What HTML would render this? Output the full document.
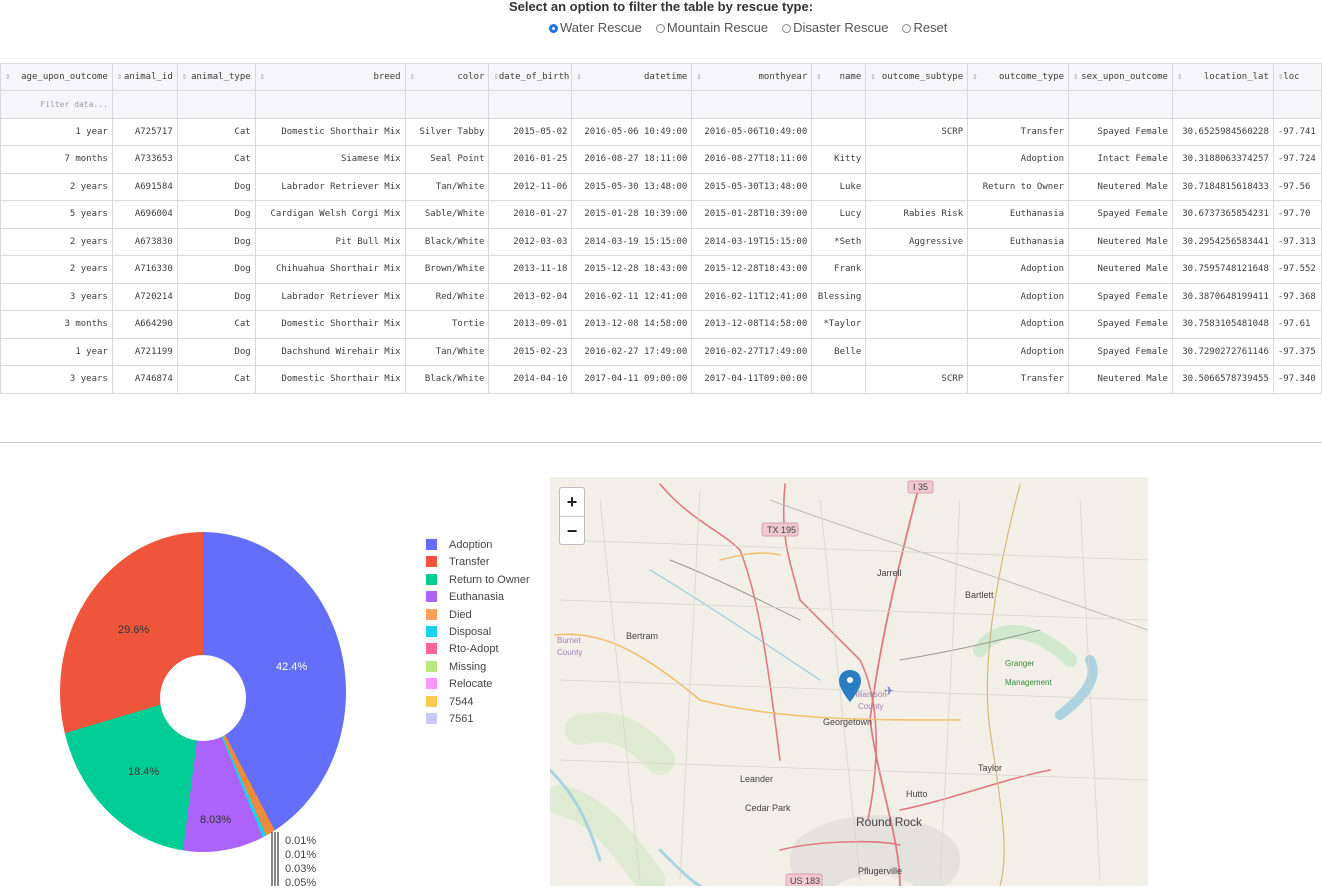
<!DOCTYPE html>
<html><head><meta charset="utf-8">
<style>
body{margin:0;width:1322px;height:886px;overflow:hidden;background:#fff;font-family:"Liberation Sans",sans-serif;position:relative}
.title{position:absolute;top:0;left:0;width:1322px;text-align:center;font-size:13px;font-weight:bold;color:#333;line-height:14px}
.radios{position:absolute;top:20px;left:549px;font-size:13px;color:#555;white-space:nowrap}
.radios span{display:inline-block;margin-right:14px}
.rb{display:inline-block;width:9px;height:9px;border:1px solid #888;border-radius:50%;vertical-align:-1px;margin-right:2px;box-sizing:border-box}
.rb.on{border:3px solid #1a73e8;background:#fff}
table{position:absolute;top:63px;left:0;border-collapse:collapse;table-layout:fixed;font-family:"DejaVu Sans Mono","Liberation Mono",monospace;font-size:9px;color:#3c3c3c}
td{border:1px solid #d8d8e0;height:26.5px;padding:0 4px;text-align:right;white-space:nowrap;overflow:hidden}
tr.h td{background:#f6f6f8;height:26px}
tr.f td{background:#f6f6f8;text-align:right;color:#999;font-size:8px}
.s{color:#aaa;float:left}
.hr{position:absolute;top:442px;left:0;width:1322px;border-top:1px solid #ccd}
.pie{position:absolute;left:60px;top:532px;width:286px;height:320px;border-radius:50%;
background:conic-gradient(#636efa 0 152.6deg,#ef8a3b 152.6deg 156.2deg,#19d3f3 156.2deg 157.6deg,#ab63fa 157.6deg 158.3deg,#ab63fa 158.3deg 187.2deg,#00cc96 187.2deg 253.4deg,#ef553b 253.4deg 360deg)}
.hole{position:absolute;left:160px;top:655px;width:86px;height:86px;border-radius:50%;background:#fff}
.pl{position:absolute;font-size:11px;color:#444}
.leg{position:absolute;left:426px;top:538px;font-size:11px;color:#444}
.leg div{height:17.4px;line-height:14px}
.leg i{display:inline-block;width:11px;height:11px;vertical-align:-2px;margin-right:12px}
.map{position:absolute;left:550px;top:477px;width:598px;height:409px;background:#f2efe9;overflow:hidden}
.zoom{position:absolute;left:559px;top:487px;width:24px;height:56px;background:#fff;border:1px solid #bbb;border-radius:3px;font-size:18px;text-align:center;line-height:28px;color:#222;font-weight:bold}
.zoom div:first-child{border-bottom:1px solid #ccc;height:28px}
</style></head><body>
<div class="title">Select an option to filter the table by rescue type:</div>
<div class="radios"><span><i class="rb on"></i>Water Rescue</span><span><i class="rb"></i>Mountain Rescue</span><span><i class="rb"></i>Disaster Rescue</span><span><i class="rb"></i>Reset</span></div>
<table>
<colgroup><col style="width:112px"><col style="width:65px"><col style="width:78px"><col style="width:150px"><col style="width:84px"><col style="width:83px"><col style="width:120px"><col style="width:120px"><col style="width:54px"><col style="width:102px"><col style="width:101px"><col style="width:104px"><col style="width:101px"><col style="width:48px"></colgroup>
<tr class="h"><td><span class="s">⇕</span>age_upon_outcome</td><td><span class="s">⇕</span>animal_id</td><td><span class="s">⇕</span>animal_type</td><td><span class="s">⇕</span>breed</td><td><span class="s">⇕</span>color</td><td><span class="s">⇕</span>date_of_birth</td><td><span class="s">⇕</span>datetime</td><td><span class="s">⇕</span>monthyear</td><td><span class="s">⇕</span>name</td><td><span class="s">⇕</span>outcome_subtype</td><td><span class="s">⇕</span>outcome_type</td><td><span class="s">⇕</span>sex_upon_outcome</td><td><span class="s">⇕</span>location_lat</td><td style="text-align:left"><span class="s">⇕</span>loc</td></tr>
<tr class="f"><td>Filter data...</td><td></td><td></td><td></td><td></td><td></td><td></td><td></td><td></td><td></td><td></td><td></td><td></td><td></td></tr>
<tr><td>1 year</td><td>A725717</td><td>Cat</td><td>Domestic Shorthair Mix</td><td>Silver Tabby</td><td>2015-05-02</td><td>2016-05-06 10:49:00</td><td>2016-05-06T10:49:00</td><td></td><td>SCRP</td><td>Transfer</td><td>Spayed Female</td><td>30.6525984560228</td><td style="text-align:left">-97.741</td></tr>
<tr><td>7 months</td><td>A733653</td><td>Cat</td><td>Siamese Mix</td><td>Seal Point</td><td>2016-01-25</td><td>2016-08-27 18:11:00</td><td>2016-08-27T18:11:00</td><td>Kitty</td><td></td><td>Adoption</td><td>Intact Female</td><td>30.3188063374257</td><td style="text-align:left">-97.724</td></tr>
<tr><td>2 years</td><td>A691584</td><td>Dog</td><td>Labrador Retriever Mix</td><td>Tan/White</td><td>2012-11-06</td><td>2015-05-30 13:48:00</td><td>2015-05-30T13:48:00</td><td>Luke</td><td></td><td>Return to Owner</td><td>Neutered Male</td><td>30.7184815618433</td><td style="text-align:left">-97.56</td></tr>
<tr><td>5 years</td><td>A696004</td><td>Dog</td><td>Cardigan Welsh Corgi Mix</td><td>Sable/White</td><td>2010-01-27</td><td>2015-01-28 10:39:00</td><td>2015-01-28T10:39:00</td><td>Lucy</td><td>Rabies Risk</td><td>Euthanasia</td><td>Spayed Female</td><td>30.6737365854231</td><td style="text-align:left">-97.70</td></tr>
<tr><td>2 years</td><td>A673830</td><td>Dog</td><td>Pit Bull Mix</td><td>Black/White</td><td>2012-03-03</td><td>2014-03-19 15:15:00</td><td>2014-03-19T15:15:00</td><td>*Seth</td><td>Aggressive</td><td>Euthanasia</td><td>Neutered Male</td><td>30.2954256583441</td><td style="text-align:left">-97.313</td></tr>
<tr><td>2 years</td><td>A716330</td><td>Dog</td><td>Chihuahua Shorthair Mix</td><td>Brown/White</td><td>2013-11-18</td><td>2015-12-28 18:43:00</td><td>2015-12-28T18:43:00</td><td>Frank</td><td></td><td>Adoption</td><td>Neutered Male</td><td>30.7595748121648</td><td style="text-align:left">-97.552</td></tr>
<tr><td>3 years</td><td>A720214</td><td>Dog</td><td>Labrador Retriever Mix</td><td>Red/White</td><td>2013-02-04</td><td>2016-02-11 12:41:00</td><td>2016-02-11T12:41:00</td><td>Blessing</td><td></td><td>Adoption</td><td>Spayed Female</td><td>30.3870648199411</td><td style="text-align:left">-97.368</td></tr>
<tr><td>3 months</td><td>A664290</td><td>Cat</td><td>Domestic Shorthair Mix</td><td>Tortie</td><td>2013-09-01</td><td>2013-12-08 14:58:00</td><td>2013-12-08T14:58:00</td><td>*Taylor</td><td></td><td>Adoption</td><td>Spayed Female</td><td>30.7583105481048</td><td style="text-align:left">-97.61</td></tr>
<tr><td>1 year</td><td>A721199</td><td>Dog</td><td>Dachshund Wirehair Mix</td><td>Tan/White</td><td>2015-02-23</td><td>2016-02-27 17:49:00</td><td>2016-02-27T17:49:00</td><td>Belle</td><td></td><td>Adoption</td><td>Spayed Female</td><td>30.7290272761146</td><td style="text-align:left">-97.375</td></tr>
<tr><td>3 years</td><td>A746874</td><td>Cat</td><td>Domestic Shorthair Mix</td><td>Black/White</td><td>2014-04-10</td><td>2017-04-11 09:00:00</td><td>2017-04-11T09:00:00</td><td></td><td>SCRP</td><td>Transfer</td><td>Neutered Male</td><td>30.5066578739455</td><td style="text-align:left">-97.340</td></tr>
</table>
<div class="hr"></div>

<div class="pie"></div><div class="hole"></div>
<div class="pl" style="left:118px;top:624px;color:#333">29.6%</div>
<div class="pl" style="left:276px;top:661px;color:#fff">42.4%</div>
<div class="pl" style="left:128px;top:766px;color:#333">18.4%</div>
<div class="pl" style="left:200px;top:814px;color:#333">8.03%</div>
<svg style="position:absolute;left:260px;top:832px" width="40" height="54"><path d="M12 0V54M15 0V54M18 0V54" stroke="#444" stroke-width="1.3" fill="none"/></svg>
<div class="pl" style="left:285px;top:834px;line-height:14px">0.01%<br>0.01%<br>0.03%<br>0.05%</div>
<div class="leg">
<div><i style="background:#636efa"></i>Adoption</div>
<div><i style="background:#ef553b"></i>Transfer</div>
<div><i style="background:#00cc96"></i>Return to Owner</div>
<div><i style="background:#ab63fa"></i>Euthanasia</div>
<div><i style="background:#ffa15a"></i>Died</div>
<div><i style="background:#19d3f3"></i>Disposal</div>
<div><i style="background:#ff6692"></i>Rto-Adopt</div>
<div><i style="background:#b6e880"></i>Missing</div>
<div><i style="background:#ff97ff"></i>Relocate</div>
<div><i style="background:#fecb52"></i>7544</div>
<div><i style="background:#c8c8f8"></i>7561</div>
</div>

<div class="map">
<svg width="598" height="409" viewBox="550 477 598 409" style="position:absolute;left:0;top:0">
<g fill="none" stroke-linecap="round">
<path d="M580 730C620 720 640 740 660 760M560 800C600 810 620 840 650 880" stroke="#d6e8c8" stroke-width="30" opacity=".7"/>
<path d="M820 860C850 840 900 840 930 860" stroke="#d8d8d8" stroke-width="60" opacity=".6"/>
<path d="M980 650C1000 620 1040 630 1070 660" stroke="#c8e6c8" stroke-width="14" opacity=".8"/>
<path d="M1090 660C1100 680 1080 700 1060 715" stroke="#aad3df" stroke-width="10"/>
<path d="M550 770C580 800 590 830 600 860 620 880" stroke="#aad3df" stroke-width="3"/>
<path d="M660 850C680 870 690 880 700 886" stroke="#aad3df" stroke-width="3"/>
<path d="M650 570C700 600 760 640 820 680 860 700 880 720" stroke="#aad3df" stroke-width="1.5"/>
<path d="M660 484C690 520 720 530 740 550 760 600 770 680 780 760 790 820 800 870" stroke="#e07a80" stroke-width="1.6"/>
<path d="M785 484C780 540 790 560 800 600 820 620 840 640 860 660 880 700 880 760 868 820 860 886" stroke="#e07a80" stroke-width="1.6"/>
<path d="M918 490C900 560 880 640 870 720 880 790 900 840 900 886" stroke="#e07a80" stroke-width="1.8"/>
<path d="M900 810C950 800 1000 780 1050 770 1100 760 1148 740" stroke="#e07a80" stroke-width="1.6"/>
<path d="M780 850C820 840 880 840 900 845" stroke="#e07a80" stroke-width="1.6"/>
<path d="M555 635C600 630 640 650 700 700 780 720 860 720 960 720 1000 720 1020 710" stroke="#f0c070" stroke-width="1.6"/>
<path d="M720 560C740 555 760 550 780 555" stroke="#f0c070" stroke-width="1.5"/>
<path d="M1020 485C1000 560 980 660 990 730 1000 800 1010 850 1000 886" stroke="#d4b878" stroke-width="1.2"/>
<path d="M770 500C850 530 950 560 1148 630" stroke="#bbb" stroke-width="1"/>
<path d="M670 560C720 580 760 600 800 620M900 660C960 650 1000 640 1040 630" stroke="#999" stroke-width="1"/>
<path d="M600 500L640 880M700 490L680 880M820 500L860 880M960 500L940 880M1080 500L1100 880M560 540L1148 560M560 600L1148 620M560 680L1148 700M560 760L1148 780" stroke="#d8d4cc" stroke-width=".8"/>
</g>
<g font-family="Liberation Sans,sans-serif" font-size="9" fill="#444">
<rect x="908" y="481" width="25" height="12" rx="2" fill="#f0c8d0" stroke="#d8a0b0"/><text x="913" y="490">I 35</text>
<rect x="762" y="523" width="36" height="13" rx="2" fill="#f0c8d0" stroke="#d8a0b0"/><text x="767" y="533">TX 195</text>
<rect x="786" y="874" width="36" height="13" rx="2" fill="#f0c8d0" stroke="#d8a0b0"/><text x="790" y="884">US 183</text>
<text x="877" y="576">Jarrell</text><text x="965" y="598">Bartlett</text>
<text x="626" y="639">Bertram</text><text x="823" y="725">Georgetown</text>
<text x="740" y="782">Leander</text><text x="745" y="811">Cedar Park</text>
<text x="906" y="797">Hutto</text><text x="978" y="771">Taylor</text>
<text x="856" y="826" font-size="12">Round Rock</text><text x="858" y="874">Pflugerville</text>
<text x="557" y="643" fill="#a080b0" font-size="8">Burnet</text><text x="557" y="655" fill="#a080b0" font-size="8">County</text>
<text x="1005" y="666" fill="#3a8a3a" font-size="8">Granger</text><text x="1005" y="685" fill="#3a8a3a" font-size="8">Management</text>
<text x="848" y="697" fill="#a080b0" font-size="8">Williamson</text><text x="858" y="709" fill="#a080b0" font-size="8">County</text>
</g>
<text x="884" y="695" fill="#7070d0" font-size="12">✈</text>
<path d="M850 670c-7 0-11 5-11 11 0 8 11 21 11 21s11-13 11-21c0-6-4-11-11-11z" fill="#2a7dc0"/>
<circle cx="850" cy="680" r="3" fill="#fff"/>
</svg>
</div>
<div class="zoom"><div>+</div><div>−</div></div>
</body></html>
